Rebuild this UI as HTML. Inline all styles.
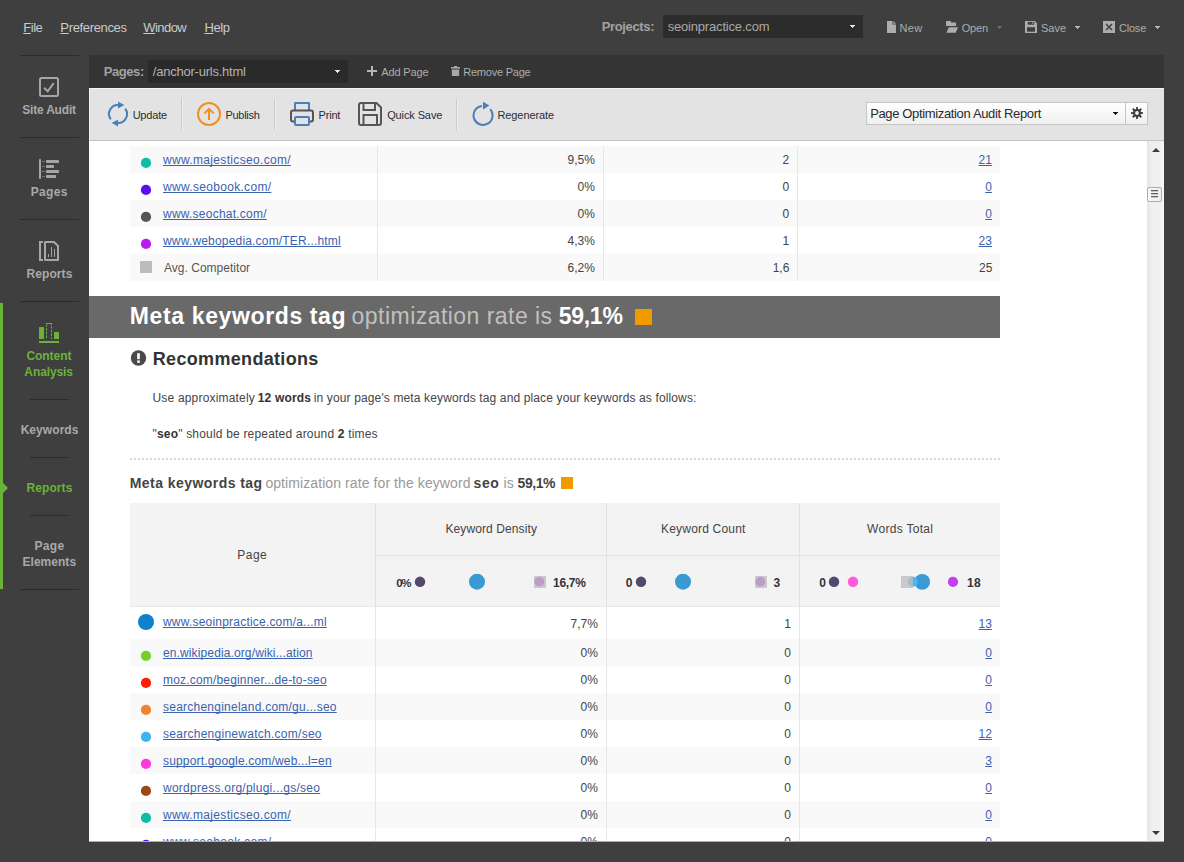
<!DOCTYPE html>
<html><head><meta charset="utf-8">
<style>
*{box-sizing:border-box;margin:0;padding:0}
html,body{width:1184px;height:862px;overflow:hidden;background:#3f3f3f;font-family:"Liberation Sans",sans-serif;font-size:12px;color:#444}
.abs{position:absolute}
#app{position:relative;width:1184px;height:862px;background:#3f3f3f;overflow:hidden}
.t{position:absolute;white-space:nowrap;line-height:normal;text-decoration-skip-ink:none}
.caret{position:absolute;width:0;height:0;border-left:3px solid transparent;border-right:3px solid transparent;border-top:3px solid #999}
.sep{position:absolute;left:20px;width:59px;height:1px;background:#2b2b2b}
.sep.s{left:30px;width:39px}
#pagesbar{position:absolute;left:89px;top:55px;width:1075px;height:33px;background:#343434}
#toolbar{position:absolute;left:89px;top:88px;width:1075px;height:53px;background:#e3e3e3;border-bottom:1px solid #c2c2c2;border-top:1px solid #f3f3f3;border-left:1px solid #efefef}
.vsep{position:absolute;top:98px;width:1px;height:32px;background:#cbcbcb;box-shadow:1px 0 0 #eeeeee}
#content{position:absolute;left:89px;top:141px;width:1058px;height:701px;background:#fff;overflow:hidden;border-bottom:1px solid #aeaeae}
#cin{position:absolute;left:-89px;top:-141px;width:1184px;height:862px}
#scroll{position:absolute;left:1147px;top:141px;width:17px;height:701px;background:linear-gradient(90deg,#e9e9e9,#f0f0f0 30%,#f0f0f0 70%,#f7f7f7);border-left:1px solid #e4e4e4;border-bottom:1px solid #aeaeae}
.row{position:absolute;left:130px;width:870px;height:27px}
.row.alt{background:#f9f9f9}
.cd{position:absolute;width:1px;background:#e7e7e7}
.dot{position:absolute;border-radius:50%}
</style></head><body>
<div id="app">
<!-- top bar -->
<div class="abs" style="left:663px;top:15px;width:200px;height:23px;background:#2c2c2c"></div>
<svg class="abs" style="left:850px;top:25px" width="5" height="3" viewBox="0 0 5 3" shape-rendering="crispEdges"><path d="M0 0h5v1h-5zM1 1h3v1h-3zM2 2h1v1h-1z" fill="#e4e4e4"/></svg>
<svg class="abs" style="left:997px;top:26px" width="5" height="3" viewBox="0 0 5 3" shape-rendering="crispEdges"><path d="M0 0h5v1h-5zM1 1h3v1h-3zM2 2h1v1h-1z" fill="#6a6a6a"/></svg>
<svg class="abs" style="left:1075px;top:26px" width="5" height="3" viewBox="0 0 5 3" shape-rendering="crispEdges"><path d="M0 0h5v1h-5zM1 1h3v1h-3zM2 2h1v1h-1z" fill="#b8b8b8"/></svg>
<svg class="abs" style="left:1155px;top:26px" width="5" height="3" viewBox="0 0 5 3" shape-rendering="crispEdges"><path d="M0 0h5v1h-5zM1 1h3v1h-3zM2 2h1v1h-1z" fill="#b8b8b8"/></svg>
<svg class="abs" style="left:887px;top:21px" width="10" height="12" viewBox="0 0 10 12"><path d="M0 0H5.5V3.5H9V12H0Z" fill="#adadad"/><path d="M6.3 0L9 2.7H6.3Z" fill="#adadad"/></svg>
<svg class="abs" style="left:945px;top:21px" width="14" height="12" viewBox="0 0 14 12"><path d="M1 0.6Q1 0 1.6 0H5.4L6.5 1.5H10.4Q11 1.5 11 2.1V5.1H1Z" fill="#adadad"/><path d="M3.9 6.2H13.1L10.6 11.8H1.4Z" fill="#adadad"/></svg>
<svg class="abs" style="left:1025px;top:21px" width="12" height="12" viewBox="0 0 12 12"><path d="M0 0H9.8L12 2.2V12H0Z" fill="#adadad"/><rect x="2.7" y="0.9" width="6.6" height="2.8" fill="#3f3f3f"/><rect x="7" y="1.2" width="1.3" height="1.8" fill="#8a8a8a"/><rect x="2" y="6.2" width="8" height="4.5" fill="#3f3f3f"/></svg>
<svg class="abs" style="left:1103px;top:21px" width="12" height="12" viewBox="0 0 12 12"><rect width="12" height="12" fill="#adadad"/><path d="M3 3L9 9M9 3L3 9" stroke="#3f3f3f" stroke-width="1.5"/></svg>
<!-- sidebar -->
<div class="sep" style="top:55px"></div>
<div class="sep" style="top:137px"></div>
<div class="sep" style="top:219px"></div>
<div class="sep" style="top:301px"></div>
<div class="sep s" style="top:399px"></div>
<div class="sep s" style="top:457px"></div>
<div class="sep s" style="top:515px"></div>
<div class="sep" style="top:589px"></div>
<div class="abs" style="left:0;top:303px;width:3px;height:286px;background:#6bb238"></div>
<div class="abs" style="left:3px;top:483px;width:0;height:0;border-top:5px solid transparent;border-bottom:5px solid transparent;border-left:5px solid #6bb238"></div>
<svg class="abs" style="left:39px;top:77px" width="20" height="20" viewBox="0 0 20 20"><rect x="1" y="1" width="18" height="18" rx="1.5" fill="none" stroke="#a6a6a6" stroke-width="2"/><path d="M5 10.7L8.7 14.3L14.7 6.2" fill="none" stroke="#a6a6a6" stroke-width="2"/></svg>
<svg class="abs" style="left:39px;top:159px" width="20" height="20" viewBox="0 0 20 20"><rect x="0" y="0" width="2" height="20" rx="0.8" fill="#a6a6a6"/><g fill="#7b6f6f"><rect x="3" y="2" width="3" height="1"/><rect x="3" y="7" width="3" height="1"/><rect x="3" y="12" width="3" height="1"/><rect x="3" y="17" width="3" height="1"/></g><g fill="#a6a6a6"><rect x="7" y="1" width="13" height="3" rx="0.8"/><rect x="7" y="6" width="8" height="3" rx="0.8"/><rect x="7" y="11" width="13" height="3" rx="0.8"/><rect x="7" y="16" width="10" height="3" rx="0.8"/></g></svg>
<svg class="abs" style="left:39px;top:241px" width="20" height="20" viewBox="0 0 20 20"><path d="M4 1H1V19H4" fill="none" stroke="#a6a6a6" stroke-width="2"/><path d="M6 1H15L19 5V19H6Z" fill="none" stroke="#a6a6a6" stroke-width="2" stroke-linejoin="round"/><g fill="#a6a6a6"><rect x="9" y="13" width="1" height="3"/><rect x="12" y="6" width="1" height="10"/><rect x="15" y="8" width="1" height="8"/></g></svg>
<svg class="abs" style="left:39px;top:323px" width="20" height="20" viewBox="0 0 20 20"><rect x="0" y="18" width="20" height="2" fill="#6bb238"/><rect x="0" y="4" width="5" height="12" rx="0.6" fill="#6bb238"/><rect x="15" y="9" width="5" height="7" rx="0.6" fill="#6bb238"/><path d="M7.5 16V0.5H12.5V16" fill="none" stroke="#6bb238" stroke-width="1" stroke-dasharray="2.5 1.2" stroke-dashoffset="-1"/><path d="M7 0.5H13" stroke="#6bb238" stroke-width="1"/></svg>
<!-- pages bar -->
<div id="pagesbar"></div>
<div class="abs" style="left:148px;top:60px;width:200px;height:23px;background:#2a2a2a"></div>
<svg class="abs" style="left:335px;top:70px" width="5" height="3" viewBox="0 0 5 3" shape-rendering="crispEdges"><path d="M0 0h5v1h-5zM1 1h3v1h-3zM2 2h1v1h-1z" fill="#e4e4e4"/></svg>
<svg class="abs" style="left:367px;top:66px" width="10" height="10" viewBox="0 0 10 10"><path d="M5 0V10M0 5H10" stroke="#b6b6b6" stroke-width="2"/></svg>
<svg class="abs" style="left:451px;top:66px" width="9" height="10" viewBox="0 0 9 10"><rect x="3" y="0" width="3" height="1" fill="#a8a8a8"/><rect x="0" y="1" width="9" height="1.6" fill="#a8a8a8"/><path d="M0.8 3.4H8.2V9.3Q8.2 10 7.5 10H1.5Q0.8 10 0.8 9.3Z" fill="#a8a8a8"/></svg>
<!-- toolbar -->
<div id="toolbar"></div>
<div class="vsep" style="left:181px"></div>
<div class="vsep" style="left:274px"></div>
<div class="vsep" style="left:456px"></div>
<svg class="abs" style="left:107px;top:101px" width="24" height="26" viewBox="0 0 24 26"><g fill="none" stroke="#4a7ebc" stroke-width="2"><path d="M11.5 4A9 9 0 0 0 3.8 18.4"/><path d="M10.5 22A9 9 0 0 0 18.2 7.6"/></g><path d="M11 0.4L17.3 4L11 7.6Z" fill="#4a7ebc"/><path d="M11 18.4L4.7 22L11 25.6Z" fill="#4a7ebc"/></svg>
<svg class="abs" style="left:196px;top:101px" width="26" height="26" viewBox="0 0 26 26"><circle cx="13" cy="13" r="11" fill="none" stroke="#f0901e" stroke-width="2"/><path d="M13 19V8M8.4 12.4L13 7.8L17.6 12.4" fill="none" stroke="#f0901e" stroke-width="2"/></svg>
<svg class="abs" style="left:289px;top:101px" width="26" height="26" viewBox="0 0 26 26"><path d="M6 9.5V2H20V9.5" fill="none" stroke="#4a7ebc" stroke-width="2" stroke-linejoin="round"/><path d="M6 20.4H4Q2 20.4 2 18.4V11.5Q2 9.5 4 9.5H22Q24 9.5 24 11.5V18.4Q24 20.4 22 20.4H20" fill="none" stroke="#555" stroke-width="2"/><rect x="6" y="16" width="14" height="8" rx="1" fill="none" stroke="#4a7ebc" stroke-width="2"/></svg>
<svg class="abs" style="left:358px;top:101px" width="26" height="26" viewBox="0 0 26 26"><path d="M3 2H18.5L23 6.5V22Q23 24 21 24H3Q1 24 1 22V4Q1 2 3 2Z" fill="none" stroke="#555" stroke-width="2"/><path d="M5.5 2V9H17V2" fill="none" stroke="#555" stroke-width="2"/><path d="M5.5 24V14H19V24" fill="none" stroke="#555" stroke-width="2"/></svg>
<svg class="abs" style="left:469.5px;top:101px" width="26" height="26" viewBox="0 0 26 26"><path d="M20.2 8.2A9.5 9.5 0 1 1 12 5" fill="none" stroke="#4a7ebc" stroke-width="2"/><path d="M13 0.8L19.4 4.6L13 8.6Z" fill="#4a7ebc"/></svg>
<div class="abs" style="left:866px;top:102px;width:282px;height:23px;background:linear-gradient(#fff,#f0f0f0);border:1px solid #c6c6c6"></div>
<div class="abs" style="left:1125px;top:103px;width:1px;height:21px;background:#c6c6c6"></div>
<svg class="abs" style="left:1113px;top:112px" width="5" height="3" viewBox="0 0 5 3" shape-rendering="crispEdges"><path d="M0 0h5v1h-5zM1 1h3v1h-3zM2 2h1v1h-1z" fill="#111"/></svg>
<svg class="abs" style="left:1131px;top:107px" width="12" height="12" viewBox="0 0 12 12"><g fill="#3e3e3e"><circle cx="6" cy="6" r="4"/><rect x="5.1" y="0" width="1.8" height="12"/><rect x="5.1" y="0" width="1.8" height="12" transform="rotate(45 6 6)"/><rect x="5.1" y="0" width="1.8" height="12" transform="rotate(90 6 6)"/><rect x="5.1" y="0" width="1.8" height="12" transform="rotate(135 6 6)"/></g><circle cx="6" cy="6" r="1.9" fill="#f4f4f4"/></svg>
<!-- scrollbar -->
<div id="scroll">
  <div class="abs" style="left:4px;top:7px;width:0;height:0;border-left:4px solid transparent;border-right:4px solid transparent;border-bottom:4px solid #3a3a3a"></div>
  <div class="abs" style="left:4px;top:690px;width:0;height:0;border-left:4px solid transparent;border-right:4px solid transparent;border-top:4px solid #3a3a3a"></div>
  <div class="abs" style="left:-1px;top:46px;width:15px;height:15px;border:1px solid #acacb2;border-radius:2px;background:linear-gradient(90deg,#fafafa,#e9edf2)"></div>
  <div class="abs" style="left:3px;top:49px;width:7px;height:1px;background:#606060;box-shadow:0 3px 0 #606060,0 6px 0 #606060,0 1px 0 #c8c8c8,0 4px 0 #c8c8c8,0 7px 0 #c8c8c8"></div>
</div>
<div class="t" id="m_file" style="left:23.29px;top:20.00px;font-size:13px;color:#cbcbcb;letter-spacing:-0.466px;"><u>F</u>ile</div>
<div class="t" id="m_pref" style="left:60.37px;top:20.00px;font-size:13px;color:#cbcbcb;letter-spacing:-0.352px;"><u>P</u>references</div>
<div class="t" id="m_win" style="left:143.29px;top:20.00px;font-size:13px;color:#cbcbcb;letter-spacing:-0.555px;"><u>W</u>indow</div>
<div class="t" id="m_help" style="left:204.46px;top:20.00px;font-size:13px;color:#cbcbcb;letter-spacing:-0.416px;"><u>H</u>elp</div>
<div class="t" id="projects" style="left:601.67px;top:19.00px;font-size:13px;color:#a2a2a2;letter-spacing:-0.346px;font-weight:bold;">Projects:</div>
<div class="t" id="proj_val" style="left:667.67px;top:19.00px;font-size:13px;color:#a8a8a8;letter-spacing:-0.182px;">seoinpractice.com</div>
<div class="t" id="b_new" style="left:899.51px;top:22.00px;font-size:11px;color:#adadad;letter-spacing:0.285px;">New</div>
<div class="t" id="b_open" style="left:961.73px;top:22.00px;font-size:11px;color:#adadad;letter-spacing:-0.205px;">Open</div>
<div class="t" id="b_save" style="left:1040.94px;top:22.00px;font-size:11px;color:#adadad;letter-spacing:0.002px;">Save</div>
<div class="t" id="b_close" style="left:1118.89px;top:22.00px;font-size:11px;color:#adadad;letter-spacing:-0.173px;">Close</div>
<div class="t" id="s_audit" style="left:22.25px;top:103.00px;font-size:12px;color:#a9a9a9;letter-spacing:-0.198px;font-weight:bold;">Site Audit</div>
<div class="t" id="s_pages" style="left:30.65px;top:185.00px;font-size:12px;color:#a9a9a9;letter-spacing:0.382px;font-weight:bold;">Pages</div>
<div class="t" id="s_reports" style="left:26.61px;top:267.00px;font-size:12px;color:#a9a9a9;letter-spacing:0.063px;font-weight:bold;">Reports</div>
<div class="t" id="s_content" style="left:26.40px;top:349.00px;font-size:12px;color:#6bb238;letter-spacing:-0.051px;font-weight:bold;">Content</div>
<div class="t" id="s_analysis" style="left:24.36px;top:365.00px;font-size:12px;color:#6bb238;letter-spacing:-0.108px;font-weight:bold;">Analysis</div>
<div class="t" id="s_keywords" style="left:20.65px;top:423.00px;font-size:12px;color:#a9a9a9;letter-spacing:0.062px;font-weight:bold;">Keywords</div>
<div class="t" id="s_reports2" style="left:26.61px;top:481.00px;font-size:12px;color:#6bb238;letter-spacing:0.063px;font-weight:bold;">Reports</div>
<div class="t" id="s_page" style="left:34.61px;top:539.00px;font-size:12px;color:#a9a9a9;letter-spacing:0.259px;font-weight:bold;">Page</div>
<div class="t" id="s_elements" style="left:22.56px;top:555.00px;font-size:12px;color:#a9a9a9;letter-spacing:0.021px;font-weight:bold;">Elements</div>
<div class="t" id="pages_lbl" style="left:103.63px;top:64.00px;font-size:13px;color:#a2a2a2;letter-spacing:-0.398px;font-weight:bold;">Pages:</div>
<div class="t" id="pages_val" style="left:152.76px;top:64.00px;font-size:13px;color:#b4b4b4;letter-spacing:-0.223px;">/anchor-urls.html</div>
<div class="t" id="addpage" style="left:381.33px;top:66.00px;font-size:11px;color:#adadad;letter-spacing:-0.152px;">Add Page</div>
<div class="t" id="rempage" style="left:463.28px;top:66.00px;font-size:11px;color:#adadad;letter-spacing:-0.234px;">Remove Page</div>
<div class="t" id="update" style="left:132.64px;top:109.00px;font-size:11px;color:#2c2c34;letter-spacing:-0.197px;">Update</div>
<div class="t" id="publish" style="left:225.51px;top:109.00px;font-size:11px;color:#2c2c34;letter-spacing:-0.305px;">Publish</div>
<div class="t" id="print" style="left:318.51px;top:109.00px;font-size:11px;color:#2c2c34;letter-spacing:-0.187px;">Print</div>
<div class="t" id="quicksave" style="left:387.14px;top:109.00px;font-size:11px;color:#2c2c34;letter-spacing:-0.109px;">Quick Save</div>
<div class="t" id="regen" style="left:497.39px;top:109.00px;font-size:11px;color:#2c2c34;letter-spacing:-0.073px;">Regenerate</div>
<div class="t" id="report_sel" style="left:870.15px;top:106.00px;font-size:13px;color:#2b2b2b;letter-spacing:-0.352px;">Page Optimization Audit Report</div>
<div id="content"><div id="cin">
<div class="row alt" style="top:146px;height:27px"></div>
<div class="cd" style="left:377px;top:146px;height:27px"></div>
<div class="cd" style="left:603px;top:146px;height:27px"></div>
<div class="cd" style="left:797px;top:146px;height:27px"></div>
<div class="row" style="top:173px;height:27px"></div>
<div class="cd" style="left:377px;top:173px;height:27px"></div>
<div class="cd" style="left:603px;top:173px;height:27px"></div>
<div class="cd" style="left:797px;top:173px;height:27px"></div>
<div class="row alt" style="top:200px;height:27px"></div>
<div class="cd" style="left:377px;top:200px;height:27px"></div>
<div class="cd" style="left:603px;top:200px;height:27px"></div>
<div class="cd" style="left:797px;top:200px;height:27px"></div>
<div class="row" style="top:227px;height:27px"></div>
<div class="cd" style="left:377px;top:227px;height:27px"></div>
<div class="cd" style="left:603px;top:227px;height:27px"></div>
<div class="cd" style="left:797px;top:227px;height:27px"></div>
<div class="row alt" style="top:254px;height:27px"></div>
<div class="cd" style="left:377px;top:254px;height:27px"></div>
<div class="cd" style="left:603px;top:254px;height:27px"></div>
<div class="cd" style="left:797px;top:254px;height:27px"></div>
<div class="abs" style="left:89px;top:296px;width:911px;height:42px;background:#696969"></div>
<div class="abs" style="left:635px;top:309px;width:17px;height:16px;background:#f09a00"></div>
<div class="abs" style="left:130px;top:458px;width:870px;height:2px;background:repeating-linear-gradient(90deg,#d6d6d6 0,#d6d6d6 2px,transparent 2px,transparent 4px)"></div>
<div class="abs" style="left:561px;top:477px;width:12px;height:12px;background:#f09a00"></div>
<div class="abs" style="left:130px;top:503px;width:870px;height:104px;background:#f3f3f3;border-bottom:1px solid #e8e8e8"></div>
<div class="cd" style="left:375px;top:503px;height:105px;background:#e2e2e2"></div>
<div class="cd" style="left:606px;top:503px;height:105px;background:#e2e2e2"></div>
<div class="cd" style="left:799px;top:503px;height:105px;background:#e2e2e2"></div>
<div class="abs" style="left:376px;top:555px;width:624px;height:1px;background:#e2e2e2"></div>
<div class="row" style="top:608px;height:31px"></div>
<div class="cd" style="left:375px;top:608px;height:31px"></div>
<div class="cd" style="left:606px;top:608px;height:31px"></div>
<div class="cd" style="left:799px;top:608px;height:31px"></div>
<div class="row alt" style="top:639px;height:27px"></div>
<div class="cd" style="left:375px;top:639px;height:27px"></div>
<div class="cd" style="left:606px;top:639px;height:27px"></div>
<div class="cd" style="left:799px;top:639px;height:27px"></div>
<div class="row" style="top:666px;height:27px"></div>
<div class="cd" style="left:375px;top:666px;height:27px"></div>
<div class="cd" style="left:606px;top:666px;height:27px"></div>
<div class="cd" style="left:799px;top:666px;height:27px"></div>
<div class="row alt" style="top:693px;height:27px"></div>
<div class="cd" style="left:375px;top:693px;height:27px"></div>
<div class="cd" style="left:606px;top:693px;height:27px"></div>
<div class="cd" style="left:799px;top:693px;height:27px"></div>
<div class="row" style="top:720px;height:27px"></div>
<div class="cd" style="left:375px;top:720px;height:27px"></div>
<div class="cd" style="left:606px;top:720px;height:27px"></div>
<div class="cd" style="left:799px;top:720px;height:27px"></div>
<div class="row alt" style="top:747px;height:27px"></div>
<div class="cd" style="left:375px;top:747px;height:27px"></div>
<div class="cd" style="left:606px;top:747px;height:27px"></div>
<div class="cd" style="left:799px;top:747px;height:27px"></div>
<div class="row" style="top:774px;height:27px"></div>
<div class="cd" style="left:375px;top:774px;height:27px"></div>
<div class="cd" style="left:606px;top:774px;height:27px"></div>
<div class="cd" style="left:799px;top:774px;height:27px"></div>
<div class="row alt" style="top:801px;height:27px"></div>
<div class="cd" style="left:375px;top:801px;height:27px"></div>
<div class="cd" style="left:606px;top:801px;height:27px"></div>
<div class="cd" style="left:799px;top:801px;height:27px"></div>
<div class="row" style="top:828px;height:27px"></div>
<div class="cd" style="left:375px;top:828px;height:27px"></div>
<div class="cd" style="left:606px;top:828px;height:27px"></div>
<div class="cd" style="left:799px;top:828px;height:27px"></div>
<svg class="abs" style="left:0;top:0" width="1184" height="862" viewBox="0 0 1184 862"><circle cx="146" cy="162.9" r="5.1" fill="#0dbea4"/><circle cx="146" cy="189.9" r="5.1" fill="#5a0ff0"/><circle cx="146" cy="216.9" r="5.1" fill="#555555"/><circle cx="146" cy="243.9" r="5.1" fill="#b91cf0"/><rect x="140" y="261" width="12" height="12" fill="#bcbcbc"/><circle cx="420" cy="581.85" r="5.25" fill="#54486e"/><circle cx="477" cy="581.7" r="8" fill="#3a9ad4"/><circle cx="539.4" cy="581.7" r="4.9" fill="#b91cf0"/><rect x="534" y="576" width="12" height="12" fill="#bebebe" fill-opacity="0.79"/><circle cx="641" cy="581.85" r="5.25" fill="#54486e"/><circle cx="683" cy="581.7" r="8" fill="#3a9ad4"/><circle cx="760.4" cy="581.7" r="4.9" fill="#b91cf0"/><rect x="755" y="576" width="12" height="12" fill="#bebebe" fill-opacity="0.79"/><circle cx="834" cy="581.85" r="5.25" fill="#54486e"/><circle cx="853" cy="581.85" r="5.25" fill="#ff5adc"/><circle cx="922.2" cy="581.9" r="7.85" fill="#3a9ad4"/><circle cx="912.9" cy="581.8" r="5" fill="#46b8f6"/><rect x="901" y="576" width="12" height="12" fill="#bebebe" fill-opacity="0.79"/><circle cx="953" cy="581.85" r="5.1" fill="#c43cf5"/><circle cx="146" cy="622" r="8" fill="#0f82cc"/><circle cx="146" cy="655.9" r="5.1" fill="#76cf28"/><circle cx="146" cy="682.9" r="5.1" fill="#fb2004"/><circle cx="146" cy="709.9" r="5.1" fill="#f08232"/><circle cx="146" cy="736.9" r="5.1" fill="#3cb4f0"/><circle cx="146" cy="763.9" r="5.1" fill="#ff38de"/><circle cx="146" cy="790.9" r="5.1" fill="#9a4a12"/><circle cx="146" cy="817.9" r="5.1" fill="#0dbea4"/><circle cx="146" cy="844.9" r="5.1" fill="#5a0ff0"/><circle cx="138.5" cy="358" r="7.7" fill="#4a4a4a"/><rect x="137.2" y="353.2" width="2.6" height="6" fill="#fff"/><rect x="137.2" y="360.4" width="2.6" height="2.4" fill="#fff"/></svg>
<div class="t" id="t1l0" style="left:163.00px;top:153.00px;font-size:12px;color:#3b62ae;letter-spacing:0.329px;text-decoration:underline;">www.majesticseo.com/</div>
<div class="t" id="t1a0" style="left:567.57px;top:153.00px;font-size:12px;color:#444;">9,5%</div>
<div class="t" id="t1b0" style="left:782.55px;top:153.00px;font-size:12px;color:#444;">2</div>
<div class="t" id="t1c0" style="left:978.60px;top:153.00px;font-size:12px;color:#3b62ae;text-decoration:underline;">21</div>
<div class="t" id="t1l1" style="left:163.00px;top:180.00px;font-size:12px;color:#3b62ae;letter-spacing:0.311px;text-decoration:underline;">www.seobook.com/</div>
<div class="t" id="t1a1" style="left:577.57px;top:180.00px;font-size:12px;color:#444;">0%</div>
<div class="t" id="t1b1" style="left:782.58px;top:180.00px;font-size:12px;color:#444;">0</div>
<div class="t" id="t1c1" style="left:985.24px;top:180.00px;font-size:12px;color:#3b62ae;text-decoration:underline;">0</div>
<div class="t" id="t1l2" style="left:163.00px;top:207.00px;font-size:12px;color:#3b62ae;letter-spacing:0.236px;text-decoration:underline;">www.seochat.com/</div>
<div class="t" id="t1a2" style="left:577.57px;top:207.00px;font-size:12px;color:#444;">0%</div>
<div class="t" id="t1b2" style="left:782.58px;top:207.00px;font-size:12px;color:#444;">0</div>
<div class="t" id="t1c2" style="left:985.24px;top:207.00px;font-size:12px;color:#3b62ae;text-decoration:underline;">0</div>
<div class="t" id="t1l3" style="left:163.00px;top:234.00px;font-size:12px;color:#3b62ae;letter-spacing:0.182px;text-decoration:underline;">www.webopedia.com/TER...html</div>
<div class="t" id="t1a3" style="left:567.57px;top:234.00px;font-size:12px;color:#444;">4,3%</div>
<div class="t" id="t1b3" style="left:782.61px;top:234.00px;font-size:12px;color:#444;">1</div>
<div class="t" id="t1c3" style="left:978.60px;top:234.00px;font-size:12px;color:#3b62ae;text-decoration:underline;">23</div>
<div class="t" id="t1l4" style="left:164.01px;top:261.00px;font-size:12px;color:#555;letter-spacing:0.020px;">Avg. Competitor</div>
<div class="t" id="t1a4" style="left:567.57px;top:261.00px;font-size:12px;color:#444;">6,2%</div>
<div class="t" id="t1b4" style="left:772.63px;top:261.00px;font-size:12px;color:#444;">1,6</div>
<div class="t" id="t1c4" style="left:979.11px;top:261.00px;font-size:12px;color:#444;">25</div>
<div class="t" id="h1a" style="left:129.83px;top:303.01px;font-size:23px;color:#fff;letter-spacing:0.623px;font-weight:bold;">Meta keywords tag</div>
<div class="t" id="h1b" style="left:351.58px;top:303.01px;font-size:23px;color:#c0c0c0;letter-spacing:0.461px;">optimization rate is</div>
<div class="t" id="h1c" style="left:558.73px;top:303.01px;font-size:23px;color:#fff;letter-spacing:-0.275px;font-weight:bold;">59,1%</div>
<div class="t" id="rec" style="left:152.77px;top:349.01px;font-size:18px;color:#333;letter-spacing:0.325px;font-weight:bold;">Recommendations</div>
<div class="t" id="p1a" style="left:152.53px;top:391.00px;font-size:12px;color:#444;letter-spacing:0.180px;">Use approximately</div>
<div class="t" id="p1b" style="left:257.72px;top:391.00px;font-size:12px;color:#333;letter-spacing:0.166px;font-weight:bold;">12 words</div>
<div class="t" id="p1c" style="left:313.80px;top:391.00px;font-size:12px;color:#444;letter-spacing:0.131px;">in your page's meta keywords tag and place your keywords as follows:</div>
<div class="t" id="p2" style="left:152.53px;top:427.00px;font-size:12px;color:#444;letter-spacing:0.186px;">"<b style="color:#333">seo</b>" should be repeated around <b style="color:#333">2</b> times</div>
<div class="t" id="h2a" style="left:129.72px;top:475.00px;font-size:14px;color:#444;letter-spacing:0.444px;font-weight:bold;">Meta keywords tag</div>
<div class="t" id="h2b" style="left:265.39px;top:475.00px;font-size:14px;color:#999;letter-spacing:0.086px;">optimization rate for the keyword</div>
<div class="t" id="h2c" style="left:473.59px;top:475.00px;font-size:14px;color:#444;letter-spacing:0.550px;font-weight:bold;">seo</div>
<div class="t" id="h2d" style="left:503.51px;top:475.00px;font-size:14px;color:#999;letter-spacing:0.236px;">is</div>
<div class="t" id="h2e" style="left:517.62px;top:475.00px;font-size:14px;color:#444;letter-spacing:-0.455px;font-weight:bold;">59,1%</div>
<div class="t" id="th_page" style="left:237.23px;top:548.00px;font-size:12px;color:#444;letter-spacing:0.516px;">Page</div>
<div class="t" id="th_kd" style="left:445.50px;top:522.00px;font-size:12px;color:#444;letter-spacing:0.096px;">Keyword Density</div>
<div class="t" id="th_kc" style="left:661.06px;top:522.00px;font-size:12px;color:#444;letter-spacing:0.188px;">Keyword Count</div>
<div class="t" id="th_wt" style="left:867.00px;top:522.00px;font-size:12px;color:#444;letter-spacing:0.307px;">Words Total</div>
<div class="t" id="c_kd0" style="left:396.15px;top:577.00px;font-size:11.5px;color:#333;letter-spacing:-1.362px;font-weight:bold;">0%</div>
<div class="t" id="c_kd1" style="left:553.02px;top:576.00px;font-size:12px;color:#333;letter-spacing:-0.294px;font-weight:bold;">16,7%</div>
<div class="t" id="c_kc0" style="left:625.83px;top:576.00px;font-size:12px;color:#333;font-weight:bold;">0</div>
<div class="t" id="c_kc1" style="left:773.54px;top:576.00px;font-size:12px;color:#333;font-weight:bold;">3</div>
<div class="t" id="c_wt0" style="left:819.24px;top:576.00px;font-size:12px;color:#333;font-weight:bold;">0</div>
<div class="t" id="c_wt1" style="left:967.02px;top:576.00px;font-size:12px;color:#333;letter-spacing:0.289px;font-weight:bold;">18</div>
<div class="t" id="t2l0" style="left:163.00px;top:615.00px;font-size:12px;color:#3b62ae;letter-spacing:0.206px;text-decoration:underline;">www.seoinpractice.com/a...ml</div>
<div class="t" id="t2a0" style="left:570.57px;top:617.00px;font-size:12px;color:#444;">7,7%</div>
<div class="t" id="t2b0" style="left:784.33px;top:617.00px;font-size:12px;color:#444;">1</div>
<div class="t" id="t2c0" style="left:978.60px;top:617.00px;font-size:12px;color:#3b62ae;text-decoration:underline;">13</div>
<div class="t" id="t2l1" style="left:163.00px;top:646.00px;font-size:12px;color:#3b62ae;letter-spacing:0.122px;text-decoration:underline;">en.wikipedia.org/wiki...ation</div>
<div class="t" id="t2a1" style="left:580.57px;top:646.00px;font-size:12px;color:#444;">0%</div>
<div class="t" id="t2b1" style="left:784.19px;top:646.00px;font-size:12px;color:#444;">0</div>
<div class="t" id="t2c1" style="left:985.24px;top:646.00px;font-size:12px;color:#3b62ae;text-decoration:underline;">0</div>
<div class="t" id="t2l2" style="left:163.00px;top:673.00px;font-size:12px;color:#3b62ae;letter-spacing:0.180px;text-decoration:underline;">moz.com/beginner...de-to-seo</div>
<div class="t" id="t2a2" style="left:580.57px;top:673.00px;font-size:12px;color:#444;">0%</div>
<div class="t" id="t2b2" style="left:784.19px;top:673.00px;font-size:12px;color:#444;">0</div>
<div class="t" id="t2c2" style="left:985.24px;top:673.00px;font-size:12px;color:#3b62ae;text-decoration:underline;">0</div>
<div class="t" id="t2l3" style="left:163.00px;top:700.00px;font-size:12px;color:#3b62ae;letter-spacing:0.239px;text-decoration:underline;">searchengineland.com/gu...seo</div>
<div class="t" id="t2a3" style="left:580.57px;top:700.00px;font-size:12px;color:#444;">0%</div>
<div class="t" id="t2b3" style="left:784.19px;top:700.00px;font-size:12px;color:#444;">0</div>
<div class="t" id="t2c3" style="left:985.24px;top:700.00px;font-size:12px;color:#3b62ae;text-decoration:underline;">0</div>
<div class="t" id="t2l4" style="left:163.00px;top:727.00px;font-size:12px;color:#3b62ae;letter-spacing:0.269px;text-decoration:underline;">searchenginewatch.com/seo</div>
<div class="t" id="t2a4" style="left:580.57px;top:727.00px;font-size:12px;color:#444;">0%</div>
<div class="t" id="t2b4" style="left:784.19px;top:727.00px;font-size:12px;color:#444;">0</div>
<div class="t" id="t2c4" style="left:978.60px;top:727.00px;font-size:12px;color:#3b62ae;text-decoration:underline;">12</div>
<div class="t" id="t2l5" style="left:163.00px;top:754.00px;font-size:12px;color:#3b62ae;letter-spacing:0.171px;text-decoration:underline;">support.google.com/web...l=en</div>
<div class="t" id="t2a5" style="left:580.57px;top:754.00px;font-size:12px;color:#444;">0%</div>
<div class="t" id="t2b5" style="left:784.19px;top:754.00px;font-size:12px;color:#444;">0</div>
<div class="t" id="t2c5" style="left:985.24px;top:754.00px;font-size:12px;color:#3b62ae;text-decoration:underline;">3</div>
<div class="t" id="t2l6" style="left:163.00px;top:781.00px;font-size:12px;color:#3b62ae;letter-spacing:0.254px;text-decoration:underline;">wordpress.org/plugi...gs/seo</div>
<div class="t" id="t2a6" style="left:580.57px;top:781.00px;font-size:12px;color:#444;">0%</div>
<div class="t" id="t2b6" style="left:784.19px;top:781.00px;font-size:12px;color:#444;">0</div>
<div class="t" id="t2c6" style="left:985.24px;top:781.00px;font-size:12px;color:#3b62ae;text-decoration:underline;">0</div>
<div class="t" id="t2l7" style="left:163.00px;top:808.00px;font-size:12px;color:#3b62ae;letter-spacing:0.329px;text-decoration:underline;">www.majesticseo.com/</div>
<div class="t" id="t2a7" style="left:580.57px;top:808.00px;font-size:12px;color:#444;">0%</div>
<div class="t" id="t2b7" style="left:784.19px;top:808.00px;font-size:12px;color:#444;">0</div>
<div class="t" id="t2c7" style="left:985.24px;top:808.00px;font-size:12px;color:#3b62ae;text-decoration:underline;">0</div>
<div class="t" id="t2l8" style="left:163.00px;top:835.00px;font-size:12px;color:#3b62ae;letter-spacing:0.311px;text-decoration:underline;">www.seobook.com/</div>
<div class="t" id="t2a8" style="left:580.57px;top:835.00px;font-size:12px;color:#444;">0%</div>
<div class="t" id="t2b8" style="left:784.19px;top:835.00px;font-size:12px;color:#444;">0</div>
<div class="t" id="t2c8" style="left:985.24px;top:835.00px;font-size:12px;color:#3b62ae;text-decoration:underline;">0</div>
</div></div>
</div>
</body></html>
